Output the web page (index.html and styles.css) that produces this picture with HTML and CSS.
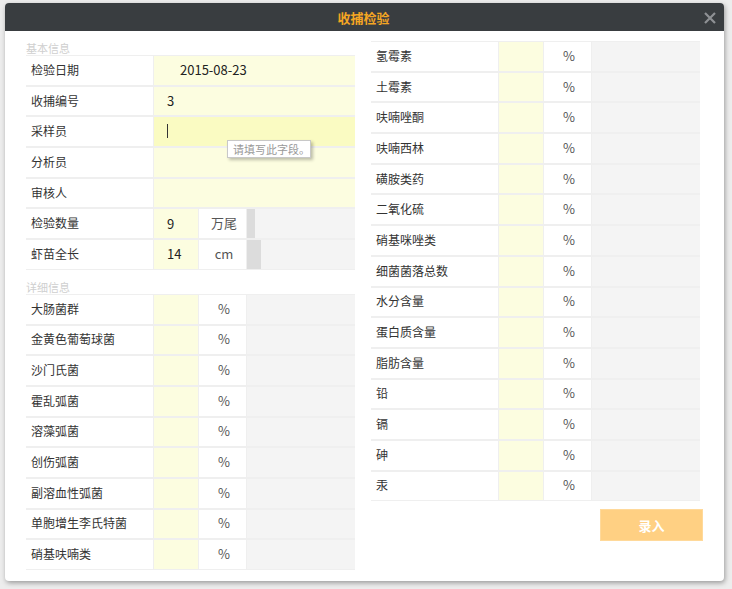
FILE: index.html
```html
<!DOCTYPE html>
<html lang="zh">
<head>
<meta charset="utf-8">
<link rel="stylesheet" href="styles.css">
</head>
<body>
<div class="modal">
  <div class="modal-head">
    <span class="title">收捕检验</span>
    <svg class="close" width="12" height="12" viewBox="0 0 12 12"><path d="M1 1L11 11M11 1L1 11" stroke="#8e9194" stroke-width="2.2" fill="none"/></svg>
  </div>
  <div class="modal-body">
    <div class="col">
      <div class="sec">基本信息</div>
      <div class="tbl">
        <div class="lab">检验日期</div><div class="val full date">2015-08-23</div>
        <div class="lab">收捕编号</div><div class="val full">3</div>
        <div class="lab">采样员</div><div class="val full focus"><span class="caret"></span><div class="tip">请填写此字段。</div></div>
        <div class="lab">分析员</div><div class="val full"></div>
        <div class="lab">审核人</div><div class="val full"></div>
        <div class="lab">检验数量</div><div class="val">9</div><div class="unit">万尾</div><div class="rest"><span class="bar b1"></span></div>
        <div class="lab">虾苗全长</div><div class="val">14</div><div class="unit">cm</div><div class="rest"><span class="bar b2"></span></div>
      </div>
      <div class="sec sec2">详细信息</div>
      <div class="tbl">
        <div class="lab">大肠菌群</div><div class="val"></div><div class="unit">%</div><div class="rest"></div>
        <div class="lab">金黄色葡萄球菌</div><div class="val"></div><div class="unit">%</div><div class="rest"></div>
        <div class="lab">沙门氏菌</div><div class="val"></div><div class="unit">%</div><div class="rest"></div>
        <div class="lab">霍乱弧菌</div><div class="val"></div><div class="unit">%</div><div class="rest"></div>
        <div class="lab">溶藻弧菌</div><div class="val"></div><div class="unit">%</div><div class="rest"></div>
        <div class="lab">创伤弧菌</div><div class="val"></div><div class="unit">%</div><div class="rest"></div>
        <div class="lab">副溶血性弧菌</div><div class="val"></div><div class="unit">%</div><div class="rest"></div>
        <div class="lab">单胞增生李氏特菌</div><div class="val"></div><div class="unit">%</div><div class="rest"></div>
        <div class="lab">硝基呋喃类</div><div class="val"></div><div class="unit">%</div><div class="rest"></div>
      </div>
    </div>
    <div class="col">
      <div class="tbl">
        <div class="lab">氢霉素</div><div class="val"></div><div class="unit">%</div><div class="rest"></div>
        <div class="lab">土霉素</div><div class="val"></div><div class="unit">%</div><div class="rest"></div>
        <div class="lab">呋喃唑酮</div><div class="val"></div><div class="unit">%</div><div class="rest"></div>
        <div class="lab">呋喃西林</div><div class="val"></div><div class="unit">%</div><div class="rest"></div>
        <div class="lab">磺胺类药</div><div class="val"></div><div class="unit">%</div><div class="rest"></div>
        <div class="lab">二氧化硫</div><div class="val"></div><div class="unit">%</div><div class="rest"></div>
        <div class="lab">硝基咪唑类</div><div class="val"></div><div class="unit">%</div><div class="rest"></div>
        <div class="lab">细菌菌落总数</div><div class="val"></div><div class="unit">%</div><div class="rest"></div>
        <div class="lab">水分含量</div><div class="val"></div><div class="unit">%</div><div class="rest"></div>
        <div class="lab">蛋白质含量</div><div class="val"></div><div class="unit">%</div><div class="rest"></div>
        <div class="lab">脂肪含量</div><div class="val"></div><div class="unit">%</div><div class="rest"></div>
        <div class="lab">铅</div><div class="val"></div><div class="unit">%</div><div class="rest"></div>
        <div class="lab">镉</div><div class="val"></div><div class="unit">%</div><div class="rest"></div>
        <div class="lab">砷</div><div class="val"></div><div class="unit">%</div><div class="rest"></div>
        <div class="lab">汞</div><div class="val"></div><div class="unit">%</div><div class="rest"></div>
      </div>
      <div class="actions"><button class="btn">录入</button></div>
    </div>
  </div>
</div>
</body>
</html>
```
FILE: styles.css
```css
* { box-sizing: border-box; }
html, body { margin: 0; padding: 0; }
body {
  width: 732px;
  height: 589px;
  background: #ededed;
  font-family: "Noto Sans CJK SC", "Noto Sans", sans-serif;
  font-size: 12px;
  color: #333;
  padding: 3px 0 0 5px;
  overflow: hidden;
}
.modal {
  width: 719px;
  height: 578px;
  background: #fff;
  border-radius: 4px;
  box-shadow: 1px 2px 5px rgba(0,0,0,0.35);
  overflow: hidden;
}
.modal-head {
  height: 28px;
  background: #393d40;
  display: flex;
  align-items: center;
  justify-content: center;
  position: relative;
}
.title {
  color: #f5a623;
  font-weight: bold;
  font-size: 13px;
  margin-left: -2px;
}
.close {
  position: absolute;
  right: 8px;
  top: 9px;
}
.modal-body {
  display: flex;
  gap: 16px;
  padding: 10px 0 0 21px;
}
.col { width: 329px; }
.sec {
  height: 14px;
  line-height: 14px;
  font-size: 11px;
  color: #cfcfcf;
}
.sec2 { margin-top: 10px; }
.tbl {
  display: grid;
  grid-template-columns: 127px 44px 47px 1fr;
  grid-auto-rows: 28.7px;
  gap: 2px 1px;
  background: #efefef;
  padding: 1px 0;
}
.lab {
  background: #fff;
  padding: 0 0 2px 5px;
  display: flex;
  align-items: center;
  color: #333;
}
.val {
  background: #fcfde0;
  display: flex;
  align-items: center;
  padding: 0 0 1px 13px;
  color: #222;
  font-size: 13px;
}
.val.full { grid-column: 2 / 5; }
.val.date { padding-left: 26px; }
.val.focus { background: #fafbc2; position: relative; }
.caret {
  width: 1px;
  height: 14px;
  background: #333;
}
.tip {
  position: absolute;
  left: 73px;
  top: 23px;
  width: 84px;
  height: 18px;
  background: #fff;
  border: 1px solid #c8c8c8;
  box-shadow: 2px 2px 3px rgba(0,0,0,0.25);
  font-size: 11px;
  color: #999;
  line-height: 16px;
  padding-left: 5px;
  z-index: 2;
}
.unit {
  background: #fff;
  display: flex;
  align-items: center;
  justify-content: center;
  color: #555;
  font-size: 13px;
  padding: 0 0 2px 3px;
}
.rest {
  background: #f4f4f4;
  display: flex;
}
.bar { background: #dcdcdc; height: 100%; }
.b1 { width: 8px; }
.b2 { width: 14px; }
.actions {
  display: flex;
  justify-content: flex-end;
  margin-top: 8px;
  margin-right: -3px;
}
.btn {
  width: 103px;
  height: 32px;
  background: #ffd083;
  border: 1px solid #ffd99a;
  color: #fff;
  font-family: inherit;
  font-size: 13px;
  font-weight: bold;
}
```
